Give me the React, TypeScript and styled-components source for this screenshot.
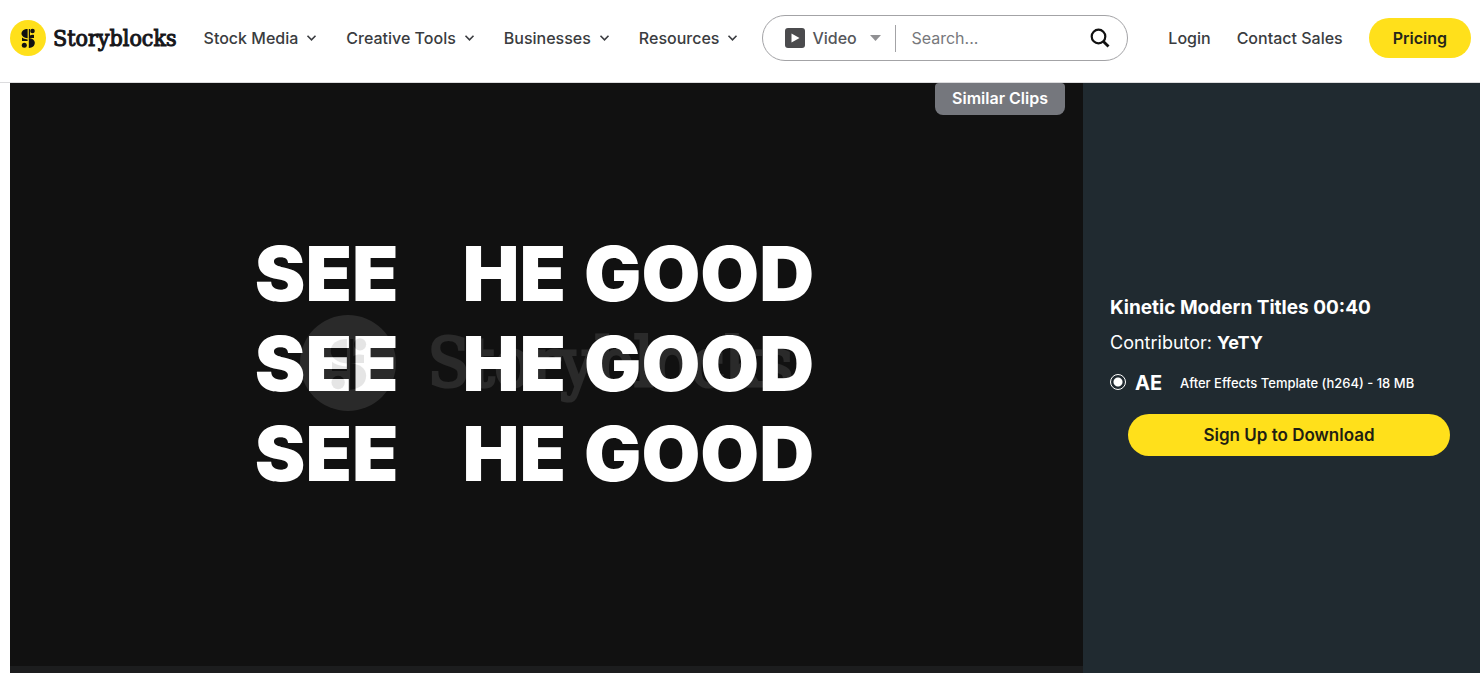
import React from "react";
import styled, { createGlobalStyle } from "styled-components";

const GlobalStyle = createGlobalStyle`
  *, *::before, *::after { box-sizing: border-box; }
  body { margin: 0; background: #fff; color: #3a3c40; font-family: Inter, "Liberation Sans", sans-serif; font-size: 16px; }
  button, input, select { font: inherit; color: inherit; }
`;

const Page = styled.div`
  display: flex;
  flex-direction: column;
  min-height: 100vh;
`;

const Header = styled.header`
  display: flex;
  align-items: center;
  gap: 24px;
  padding: 15px 9px 21px 10px;
  border-bottom: 1px solid #dcdcde;
`;

const Brand = styled.a`
  display: flex;
  align-items: center;
  gap: 7px;
  padding-right: 3px;
  color: #16161a;
  text-decoration: none;
`;

const Wordmark = styled.span<{ $size: number; $stroke: number }>`
  font-family: "DejaVu Serif Condensed", "DejaVu Serif", serif;
  font-size: ${(p) => p.$size}px;
  line-height: 1;
  -webkit-text-stroke: ${(p) => p.$stroke}px currentColor;
`;

const Nav = styled.nav`
  display: flex;
  gap: 29px;
`;

const NavButton = styled.button`
  display: flex;
  align-items: center;
  gap: 8px;
  padding: 0;
  border: 0;
  background: none;
  font-weight: 500;
  line-height: 24px;
  white-space: nowrap;
`;

const SearchBox = styled.form`
  display: flex;
  align-items: center;
  width: 366px;
  height: 46px;
  padding: 0 17px 0 21px;
  border: 1px solid #a3a3a6;
  border-radius: 23px;
  color: #55565a;
`;

const TypeSelect = styled.select`
  appearance: none;
  width: 58px;
  margin-left: 6px;
  padding: 0;
  border: 0;
  background: none;
  font-weight: 500;
  outline: none;
`;

const Divider = styled.span`
  width: 1px;
  height: 27px;
  margin: 0 15px 0 14px;
  background: #a3a3a6;
`;

const SearchInput = styled.input`
  flex: 1;
  min-width: 0;
  padding: 0;
  border: 0;
  outline: none;
  background: none;
  &::placeholder { color: #77787c; opacity: 1; }
`;

const IconButton = styled.button`
  display: flex;
  padding: 0;
  border: 0;
  background: none;
  color: #111;
`;

const Account = styled.div`
  display: flex;
  align-items: center;
  gap: 26px;
  margin-left: auto;
  white-space: nowrap;
`;

const TextLink = styled.a`
  color: inherit;
  text-decoration: none;
  font-weight: 500;
`;

const PricingLink = styled.a`
  padding: 8px 24px;
  border-radius: 20px;
  background: #ffe01b;
  color: #26261a;
  font-weight: 600;
  line-height: 24px;
  text-decoration: none;
`;

const Main = styled.main`
  flex: 1;
  display: flex;
  padding-left: 10px;
`;

const Player = styled.section`
  position: relative;
  flex: 1;
  display: flex;
  flex-direction: column;
  background: #111;
`;

const SimilarButton = styled.button`
  position: absolute;
  top: 0;
  right: 18px;
  padding: 3px 17px 5px;
  border: 0;
  border-radius: 4px 4px 8px 8px;
  background: #75777d;
  color: #fff;
  font-weight: 600;
  line-height: 24px;
`;

const Stage = styled.div`
  position: relative;
  flex: 1;
  display: flex;
  flex-direction: column;
  align-items: center;
  justify-content: center;
  padding: 0 24px 24px 0;
`;

const TitleLine = styled.div`
  display: flex;
  gap: 18px;
  color: #fff;
  font-size: 76px;
  font-weight: 900;
  line-height: 90px;
`;

const Word = styled.span<{ $gapAfter?: number }>`
  margin-right: ${(p) => p.$gapAfter ?? 0}px;
`;

const Watermark = styled.div`
  position: absolute;
  inset: 0 0 24px;
  display: flex;
  align-items: center;
  justify-content: center;
  gap: 32px;
  color: #fff;
  opacity: 0.1;
`;

const Controls = styled.div`
  height: 7px;
  background: #1c1d1e;
`;

const Details = styled.aside`
  flex: 0 0 397px;
  display: flex;
  flex-direction: column;
  justify-content: center;
  padding: 0 30px 7px 27px;
  background: #202a30;
  color: #fff;
`;

const Title = styled.h1`
  margin: 0;
  font-size: 19px;
  font-weight: 700;
  line-height: 30px;
`;

const Contributor = styled.p`
  margin: 6px 0 0;
  font-size: 18px;
  line-height: 28px;
`;

const Format = styled.label`
  display: flex;
  align-items: center;
  margin-top: 12px;
  line-height: 28px;
`;

const Radio = styled.input`
  appearance: none;
  width: 16px;
  height: 16px;
  margin: 0 9px 2px 0;
  border: 1px solid #fff;
  border-radius: 50%;
  background: radial-gradient(circle, #fff 4px, transparent 5px);
`;

const FormatTag = styled.strong`
  width: 45px;
  font-size: 20px;
`;

const FormatText = styled.span`
  font-size: 13px;
  font-weight: 500;
`;

const DownloadButton = styled.button`
  height: 42px;
  margin: 17px 0 0 18px;
  border: 0;
  border-radius: 21px;
  background: #ffe01b;
  color: #1f1f12;
  font-size: 17px;
  font-weight: 600;
`;

function LogoMark({ size, disc, glyph }: { size: number; disc: string; glyph: string }) {
  return (
    <svg width={size} height={size} viewBox="0 0 36 36" aria-hidden="true">
      <circle cx="18" cy="18" r="18" fill={disc} />
      <g fill={glyph}>
        <path d="M17.600 9V18.200C14 17.800 11.500 16.200 11.500 13.500C11.500 10.800 14 9 17.600 9Z" />
        <path d="M18.800 9H20V15.500C21 14.800 22.500 14.600 24 15V18H18.800Z" />
        <circle cx="22.500" cy="11" r="2.300" />
        <path d="M12 17.500C14 19.200 16.500 19 17.600 19.400V21H12Z" />
        <path d="M18.800 18C22.500 18.400 24.800 20 24.800 22.800C24.800 25.800 22.500 27.800 18.800 28Z" />
        <circle cx="14.300" cy="25.300" r="2.500" />
      </g>
    </svg>
  );
}

function Chevron() {
  return (
    <svg width="11" height="8" viewBox="0 0 11 8" fill="none" stroke="#3a3c40" strokeWidth="1.600" aria-hidden="true">
      <path d="M1.500 1.800 5.500 5.800 9.500 1.800" />
    </svg>
  );
}

const menus = ["Stock Media", "Creative Tools", "Businesses", "Resources"];

export default function App() {
  return (
    <Page>
      <GlobalStyle />
      <Header>
        <Brand href="#home">
          <LogoMark size={36} disc="#ffe01b" glyph="#111" />
          <Wordmark $size={23} $stroke={1}>Storyblocks</Wordmark>
        </Brand>
        <Nav>
          {menus.map((m) => (
            <NavButton key={m}>
              {m}
              <Chevron />
            </NavButton>
          ))}
        </Nav>
        <SearchBox role="search">
          <svg width="22" height="20" viewBox="0 0 22 20" aria-hidden="true">
            <rect x="1" width="20" height="20" rx="3" fill="#4b4b4d" />
            <path d="M7.500 5.500V14.500L15.500 10Z" fill="#fff" />
          </svg>
          <TypeSelect aria-label="Media type" defaultValue="Video">
            <option>Video</option>
          </TypeSelect>
          <svg width="11" height="6" viewBox="0 0 11 6" aria-hidden="true">
            <path d="M0 0H11L5.500 6Z" fill="#909093" />
          </svg>
          <Divider />
          <SearchInput aria-label="Search" placeholder="Search..." />
          <IconButton type="button" aria-label="Search">
            <svg width="20" height="20" viewBox="0 0 20 20" fill="none" stroke="currentColor" strokeWidth="2.200" aria-hidden="true">
              <circle cx="8.500" cy="8.500" r="6.800" />
              <path d="M13.400 13.400 18.500 18.500" strokeWidth="2.800" />
            </svg>
          </IconButton>
        </SearchBox>
        <Account>
          <TextLink href="#login">Login</TextLink>
          <TextLink href="#sales">Contact Sales</TextLink>
          <PricingLink href="#pricing">Pricing</PricingLink>
        </Account>
      </Header>
      <Main>
        <Player>
          <Stage>
            {[0, 1, 2].map((n) => (
              <TitleLine key={n}>
                <Word $gapAfter={46}>SEE</Word>
                <Word>HE</Word>
                <Word>GOOD</Word>
              </TitleLine>
            ))}
            <Watermark aria-hidden="true">
              <LogoMark size={96} disc="#fff" glyph="#111" />
              <Wordmark $size={68} $stroke={3}>Storyblocks</Wordmark>
            </Watermark>
          </Stage>
          <Controls />
          <SimilarButton>Similar Clips</SimilarButton>
        </Player>
        <Details>
          <Title>Kinetic Modern Titles 00:40</Title>
          <Contributor>
            Contributor: <strong>YeTY</strong>
          </Contributor>
          <Format>
            <Radio type="radio" name="format" defaultChecked />
            <FormatTag>AE</FormatTag>
            <FormatText>After Effects Template (h264) - 18 MB</FormatText>
          </Format>
          <DownloadButton>Sign Up to Download</DownloadButton>
        </Details>
      </Main>
    </Page>
  );
}
